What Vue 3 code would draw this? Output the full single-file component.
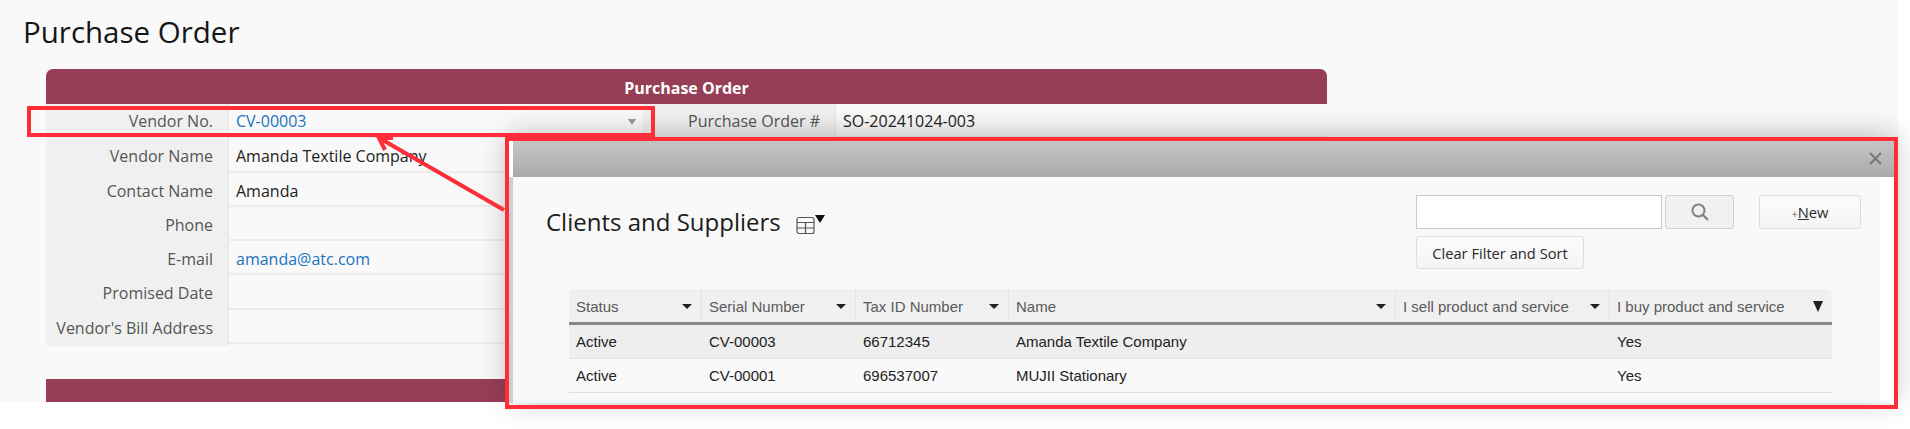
<script setup>
const rows = [
  { label: 'Vendor No.', value: 'CV-00003', link: true, caret: true, second: ['Purchase Order #', 'SO-20241024-003'] },
  { label: 'Vendor Name', value: 'Amanda Textile Company' },
  { label: 'Contact Name', value: 'Amanda' },
  { label: 'Phone', value: '' },
  { label: 'E-mail', value: 'amanda@atc.com', link: true },
  { label: 'Promised Date', value: '' },
  { label: "Vendor's Bill Address", value: '' }
]
const columns = [
  { name: 'Status', width: 133 },
  { name: 'Serial Number', width: 154 },
  { name: 'Tax ID Number', width: 153 },
  { name: 'Name', width: 387 },
  { name: 'I sell product and service', width: 214 },
  { name: 'I buy product and service', width: 222, filtered: true }
]
const records = [
  ['Active', 'CV-00003', '66712345', 'Amanda Textile Company', '', 'Yes'],
  ['Active', 'CV-00001', '696537007', 'MUJII Stationary', '', 'Yes']
]
const gridCols = columns.map(c => c.width + 'px').join(' ')
</script>

<template>
  <div class="page">
    <div class="sheet">
      <h1 class="title">Purchase Order</h1>
      <section class="form">
        <header class="form-head">Purchase Order</header>
        <div v-for="r in rows" :key="r.label" class="row">
          <div class="label">{{ r.label }}</div>
          <div class="value" :class="{ link: r.link }">
            <span>{{ r.value }}</span>
            <i v-if="r.caret" class="caret"></i>
          </div>
          <template v-if="r.second">
            <div class="label">{{ r.second[0] }}</div>
            <div class="value">{{ r.second[1] }}</div>
          </template>
        </div>
        <div class="form-foot"></div>
      </section>
    </div>

    <div class="modal">
      <div class="modal-bar">
        <svg class="close" width="13" height="13" viewBox="0 0 13 13">
          <path d="M1 1l11 11M12 1L1 12" fill="none" stroke="#777" stroke-width="2" />
        </svg>
      </div>
      <div class="modal-body">
        <div class="modal-top">
          <div class="modal-title">
            <span>Clients and Suppliers</span>
            <svg class="table-icon" width="30" height="20" viewBox="0 0 30 20">
              <rect x="1" y="2.5" width="17" height="16" rx="2" fill="none" stroke="#555" stroke-width="1.2" />
              <path d="M1 7.5h17M1 13h17M9.5 7.5v11" fill="none" stroke="#555" stroke-width="1.2" />
              <path d="M19 0h10l-5 8z" fill="#111" />
            </svg>
          </div>
          <div class="tools">
            <div class="search-line">
              <div class="search-input"></div>
              <button class="btn search-btn">
                <svg width="20" height="20" viewBox="0 0 20 20">
                  <circle cx="8.5" cy="8.5" r="6" fill="none" stroke="#808080" stroke-width="2" />
                  <path d="M13 13l5 5" stroke="#808080" stroke-width="2.2" />
                </svg>
              </button>
              <button class="btn new-btn"><small>+</small><u>N</u>ew</button>
            </div>
            <button class="btn clear-btn">Clear Filter and Sort</button>
          </div>
        </div>

        <div class="table">
          <div class="t-head" :style="{ gridTemplateColumns: gridCols }">
            <div v-for="c in columns" :key="c.name" class="th">
              <span>{{ c.name }}</span>
              <i class="sort" :class="{ filtered: c.filtered }"></i>
            </div>
          </div>
          <div
            v-for="(rec, i) in records"
            :key="rec[1]"
            class="t-row"
            :class="{ selected: i === 0 }"
            :style="{ gridTemplateColumns: gridCols }"
          >
            <div v-for="(cell, j) in rec" :key="j" class="td">{{ cell }}</div>
          </div>
        </div>
      </div>
    </div>

    <div class="mark mark-field"></div>
    <div class="mark mark-modal"></div>
    <svg class="arrow" width="140" height="85" viewBox="0 0 140 85">
      <path d="M129 75L6 4M18 3L4 3L10 15" fill="none" stroke="#ff2d37" stroke-width="4" />
    </svg>
  </div>
</template>

<style>
html, body { margin: 0; background: #fff; }
</style>

<style scoped>
.page {
  position: relative;
  width: 1910px;
  height: 429px;
  overflow: hidden;
  background: #fff;
  font-family: "Open Sans", "Noto Sans", sans-serif;
}
.sheet {
  width: 1898px;
  height: 402px;
  overflow: hidden;
  background: #f9f9f9;
}
.title {
  margin: 0;
  padding: 12px 0 0 23px;
  height: 57px;
  box-sizing: border-box;
  font-size: 29.5px;
  line-height: 40px;
  font-weight: 400;
  color: #161616;
}
.form {
  margin: 12px 0 0 46px;
  width: 1281px;
}
.form-head {
  height: 35px;
  border-radius: 7px 7px 0 0;
  background: #963e56;
  color: #fff;
  font-size: 16px;
  font-weight: 700;
  line-height: 38px;
  text-align: center;
}
.row {
  display: grid;
  grid-template-columns: 183px 414px 193px 491px;
  height: 34.3px;
  box-sizing: border-box;
  border-bottom: 2px solid #ececec;
  font-size: 16px;
  line-height: 36px;
}
.row:first-of-type { line-height: 34px; }
.label {
  padding-right: 15px;
  text-align: right;
  color: #555;
  background: #f0f0f0;
  border-right: 1px solid #e6e6e6;
  box-sizing: border-box;
  white-space: nowrap;
}
.value {
  position: relative;
  padding-left: 7px;
  color: #222;
}
.value.link { color: #1a73c0; }
.caret {
  position: absolute;
  right: 7px;
  top: 15px;
  border: 4px solid transparent;
  border-top: 6px solid #999;
  border-bottom: 0;
}
.form-foot {
  height: 23px;
  margin-top: 35px;
  background: #963e56;
}

.modal {
  position: absolute;
  left: 509px;
  top: 140px;
  width: 1385px;
  height: 263px;
  box-shadow: 0 -4px 28px rgba(0, 0, 0, 0.28);
  background: #fff;
  display: flex;
  flex-direction: column;
}
.modal-bar {
  position: relative;
  height: 37px;
  flex: none;
  margin-left: 4px;
  background: linear-gradient(#c6c6c6, #aaaaaa);
}
.close {
  position: absolute;
  right: 12px;
  top: 12px;
}
.modal-body {
  flex: 1;
  margin: 0 14px 0 0;
  padding: 18px 19px 0 56px;
  border-left: 4px solid #cfcfcf;
  background: #f9f9f9;
  box-sizing: border-box;
}
.modal-top {
  display: flex;
  justify-content: space-between;
  height: 89px;
  margin-left: -23px;
}
.modal-title {
  display: flex;
  align-items: flex-start;
  gap: 15px;
  padding-top: 8px;
  font-size: 24px;
  line-height: 38px;
  color: #1c1c1c;
}
.table-icon { margin-top: 12px; }
.tools {
  display: flex;
  flex-direction: column;
  align-items: flex-start;
  gap: 7px;
  width: 445px;
}
.search-line {
  display: flex;
  align-items: stretch;
  height: 34px;
}
.search-input {
  width: 246px;
  box-sizing: border-box;
  background: #fff;
  border: 1px solid #c9c9c9;
}
.btn {
  box-sizing: border-box;
  margin: 0;
  padding: 0;
  background: linear-gradient(#fbfbfb, #f4f4f4);
  border: 1px solid #ddd;
  border-radius: 3px;
  font-family: inherit;
  font-size: 14.7px;
  color: #2a2a2a;
}
.search-btn {
  width: 69px;
  margin-left: 3px;
  background: #f1f1f1;
  border-color: #d2d2d2;
  display: flex;
  align-items: center;
  justify-content: center;
}
.new-btn {
  width: 102px;
  margin-left: 25px;
}
.new-btn small { font-size: 11px; color: #666; }
.clear-btn {
  width: 168px;
  height: 33px;
}

.table {
  width: 1263px;
  margin-top: 5px;
  font-family: "Liberation Sans", Arial, sans-serif;
  font-size: 15px;
}
.t-head {
  display: grid;
  height: 36px;
  background: #f0f0f0;
  border-bottom: 3px solid #888;
  border-radius: 5px 5px 0 0;
  box-sizing: border-box;
}
.th {
  display: flex;
  align-items: center;
  justify-content: space-between;
  padding: 2px 9px 0 7px;
  color: #5a5a5a;
  border-right: 1px solid #e2e2e2;
  white-space: nowrap;
}
.th:last-child { border-right: 0; }
.sort {
  border: 5px solid transparent;
  border-top: 5px solid #222;
  border-bottom: 0;
}
.sort.filtered {
  border-width: 11px 5.5px 0;
  border-top-color: #222;
}
.t-row {
  display: grid;
  height: 34px;
  box-sizing: border-box;
  border-bottom: 1px solid #e0e0e0;
  line-height: 33px;
  color: #222;
}
.t-row.selected {
  background: #eeeeee;
  border-bottom: 1px solid #e4e4e4;
}
.td { padding-left: 7px; white-space: nowrap; }

.mark {
  position: absolute;
  box-sizing: border-box;
  border: 4px solid #ff2d37;
  pointer-events: none;
}
.mark-field { left: 27px; top: 106px; width: 628px; height: 31px; }
.mark-modal { left: 505px; top: 137px; width: 1393px; height: 272px; }
.arrow {
  position: absolute;
  left: 375px;
  top: 135px;
  pointer-events: none;
}
</style>
